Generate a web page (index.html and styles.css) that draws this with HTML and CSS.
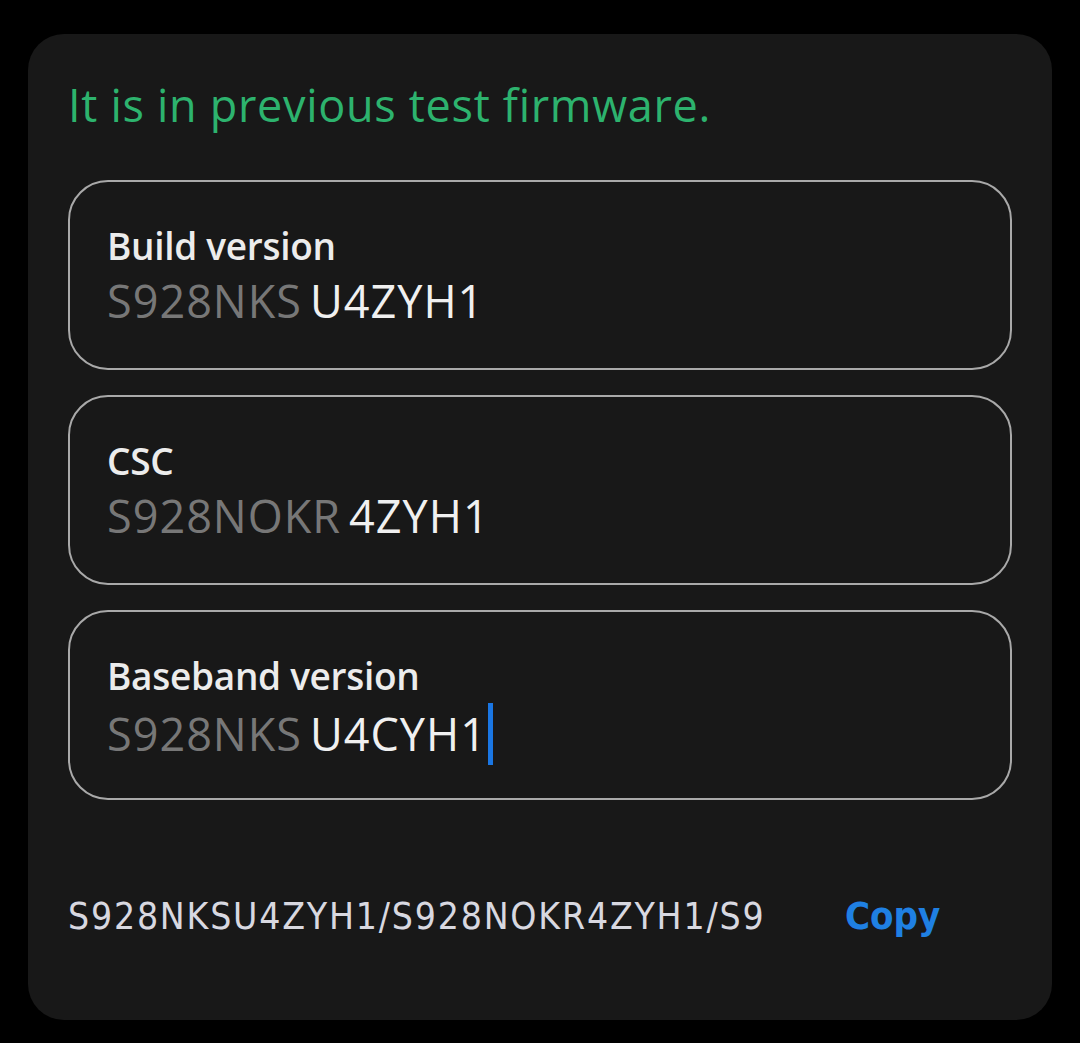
FILE: index.html
```html
<!DOCTYPE html>
<html lang="en">
<head>
  <meta charset="UTF-8">
  <meta name="viewport" content="width=device-width, initial-scale=1.0">
  <title>Firmware check</title>
  <link rel="stylesheet" href="styles.css">
</head>
<body>
  <div class="dialog">
    <p class="status">It is in previous test firmware.</p>

    <div class="field">
      <div class="label">Build version</div>
      <div class="value"><span class="prefix">S928NKS</span><span class="suffix">U4ZYH1</span></div>
    </div>

    <div class="field">
      <div class="label">CSC</div>
      <div class="value"><span class="prefix">S928NOKR</span><span class="suffix">4ZYH1</span></div>
    </div>

    <div class="field">
      <div class="label">Baseband version</div>
      <div class="value"><span class="prefix">S928NKS</span><span class="suffix">U4CYH1</span><span class="caret"></span></div>
    </div>

    <div class="footer">
      <div class="combined">S928NKSU4ZYH1/S928NOKR4ZYH1/S928NKSU4CYH1</div>
      <button class="copy">Copy</button>
    </div>
  </div>
</body>
</html>
```

FILE: styles.css
```css
html, body {
  background: #000;
}
body {
  margin: 0;
  padding: 34px 28px 23px;
  font-family: "Open Sans", "Noto Sans", sans-serif;
  color: #ececec;
}
.dialog {
  background: #181818;
  border-radius: 36px;
  padding: 40px 40px 0;
  height: 986px;
  box-sizing: border-box;
}
.status {
  margin: 0 0 45px;
  color: #2db36e;
  font-size: 45px;
  line-height: 61px;
  letter-spacing: 0.7px;
}
.field {
  border: 2px solid #a9a9a9;
  border-radius: 40px;
  height: 190px;
  box-sizing: border-box;
  padding: 40px 37px 0;
  margin-bottom: 25px;
}
.label {
  font-weight: 600;
  font-size: 37px;
  line-height: 48px;
  letter-spacing: -0.3px;
  color: #ececec;
}
.value {
  display: flex;
  align-items: center;
  margin-top: 3px;
  font-size: 45px;
  line-height: 56px;
  letter-spacing: 1px;
}
.prefix {
  color: #777;
  margin-right: 8px;
}
.suffix {
  color: #f0f0f0;
}
.caret {
  width: 5px;
  height: 62px;
  background: #1a76e3;
  margin-left: 1px;
}
.footer {
  display: flex;
  align-items: baseline;
  margin-top: 92px;
}
.combined {
  width: 697px;
  overflow: hidden;
  white-space: nowrap;
  font-family: "DejaVu Sans", sans-serif;
  font-stretch: condensed;
  font-size: 37px;
  line-height: 48px;
  letter-spacing: 1.8px;
  color: #d8d8e0;
}
.copy {
  margin-left: 80px;
  background: none;
  border: none;
  padding: 0;
  font-family: "DejaVu Sans", sans-serif;
  font-stretch: condensed;
  font-weight: 600;
  font-size: 38px;
  line-height: 48px;
  color: #1f80e3;
}
```
